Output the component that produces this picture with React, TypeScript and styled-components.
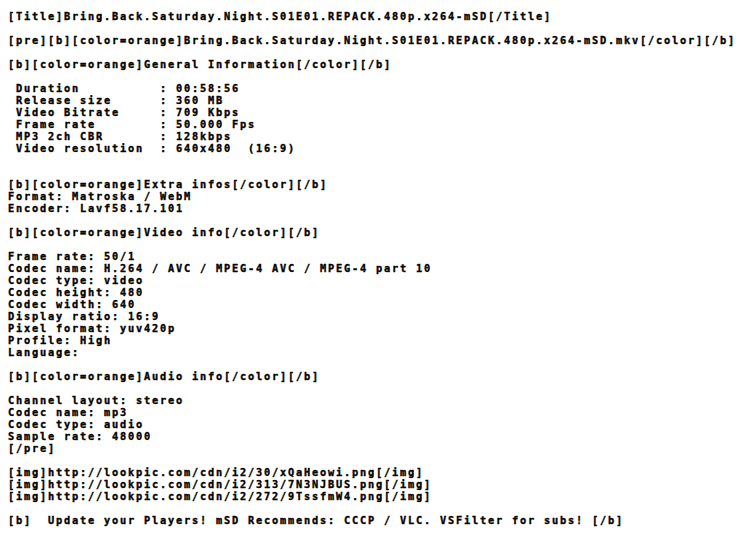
import React from "react";
import styled, { createGlobalStyle } from "styled-components";

const Global = createGlobalStyle`
  html, body { margin: 0; padding: 0; background: #ffffff; }
  body { padding: 8px; }
`;

const Page = styled.div`
  display: flex;
  flex-direction: column;
  font-family: "DejaVu Sans Mono", "Liberation Mono", monospace;
  font-weight: bold;
  font-size: 10.3px;
  letter-spacing: 1.8px;
  color: #000000;
  -webkit-text-stroke: 0.35px #000000;
`;

const Line = styled.div`
  height: 12px;
  line-height: 12px;
  white-space: pre;
  padding-top: 2px;
  box-sizing: border-box;
`;

const lines: string[] = [
  "[Title]Bring.Back.Saturday.Night.S01E01.REPACK.480p.x264-mSD[/Title]",
  "",
  "[pre][b][color=orange]Bring.Back.Saturday.Night.S01E01.REPACK.480p.x264-mSD.mkv[/color][/b]",
  "",
  "[b][color=orange]General Information[/color][/b]",
  "",
  " Duration          : 00:58:56",
  " Release size      : 360 MB",
  " Video Bitrate     : 709 Kbps",
  " Frame rate        : 50.000 Fps",
  " MP3 2ch CBR       : 128kbps",
  " Video resolution  : 640x480  (16:9)",
  "",
  "",
  "[b][color=orange]Extra infos[/color][/b]",
  "Format: Matroska / WebM",
  "Encoder: Lavf58.17.101",
  "",
  "[b][color=orange]Video info[/color][/b]",
  "",
  "Frame rate: 50/1",
  "Codec name: H.264 / AVC / MPEG-4 AVC / MPEG-4 part 10",
  "Codec type: video",
  "Codec height: 480",
  "Codec width: 640",
  "Display ratio: 16:9",
  "Pixel format: yuv420p",
  "Profile: High",
  "Language:",
  "",
  "[b][color=orange]Audio info[/color][/b]",
  "",
  "Channel layout: stereo",
  "Codec name: mp3",
  "Codec type: audio",
  "Sample rate: 48000",
  "[/pre]",
  "",
  "[img]http://lookpic.com/cdn/i2/30/xQaHeowi.png[/img]",
  "[img]http://lookpic.com/cdn/i2/313/7N3NJBUS.png[/img]",
  "[img]http://lookpic.com/cdn/i2/272/9TssfmW4.png[/img]",
  "",
  "[b]  Update your Players! mSD Recommends: CCCP / VLC. VSFilter for subs! [/b]",
];

export default function App() {
  return (
    <>
      <Global />
      <Page>
        {lines.map((l, i) => (
          <Line key={i}>{l || " "}</Line>
        ))}
      </Page>
    </>
  );
}
